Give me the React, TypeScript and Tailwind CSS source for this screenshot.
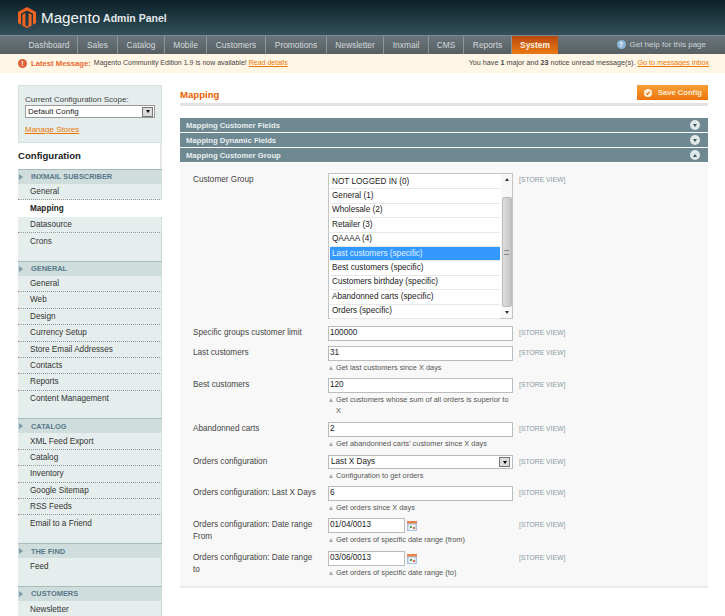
const navItems = ["Dashboard", "Sales", "Catalog", "Mobile", "Customers", "Promotions", "Newsletter", "Inxmail", "CMS", "Reports"];

const navWidths = ["w-[57px]", "w-[40px]", "w-[47px]", "w-[42px]", "w-[59px]", "w-[61px]", "w-[57px]", "w-[45px]", "w-[35px]", "w-[48px]"];

const groupOptions = [
  "NOT LOGGED IN (0)",
  "General (1)",
  "Wholesale (2)",
  "Retailer (3)",
  "QAAAA (4)",
  "Last customers (specific)",
  "Best customers (specific)",
  "Customers birthday (specific)",
  "Abandonned carts (specific)",
  "Orders (specific)",
];

const sideSections = [
  { title: "INXMAIL SUBSCRIBER", items: ["General", "Mapping", "Datasource", "Crons"] },
  { title: "GENERAL", items: ["General", "Web", "Design", "Currency Setup", "Store Email Addresses", "Contacts", "Reports", "Content Management"] },
  { title: "CATALOG", items: ["XML Feed Export", "Catalog", "Inventory", "Google Sitemap", "RSS Feeds", "Email to a Friend"] },
  { title: "THE FIND", items: ["Feed"] },
  { title: "CUSTOMERS", items: ["Newsletter"] },
];

const MagentoLogo = () => (
  <svg width="18" height="21" viewBox="0 0 18 21" className="shrink-0">
    <path d="M9 0 L18 5 V16 L15 17.8 V6.8 L9 3.4 L3 6.8 V17.8 L0 16 V5 Z" fill="#f26322" />
    <path d="M4.4 7.6 L7.4 5.9 V18.6 L9 19.6 L10.6 18.6 V5.9 L13.6 7.6 V18.8 L9 21 L4.4 18.8 Z" fill="#f26322" />
  </svg>
);

const Calendar = () => (
  <svg width="10" height="10" viewBox="0 0 10 10" className="ml-[2px] shrink-0">
    <rect x="0" y="0" width="10" height="10" fill="#a9c4da" />
    <rect x="0" y="0" width="10" height="2.5" fill="#e8834a" />
    <rect x="1.5" y="3.5" width="7" height="5.5" fill="#eef3f7" />
    <rect x="3" y="5" width="2" height="2" fill="#4f9e4a" />
    <rect x="6" y="6" width="2" height="2" fill="#d9683a" />
  </svg>
);

const SelectArrow = () => (
  <span className="flex h-[10px] w-[11px] items-center justify-center border border-[#777] bg-[#dcdcdc]">
    <span className="h-0 w-0 border-x-[2.5px] border-t-[3px] border-x-transparent border-t-black" />
  </span>
);

const Toggle = ({ up }: { up?: boolean }) => (
  <span className="flex h-[10px] w-[10px] items-center justify-center rounded-full bg-[#dfe7e7]">
    {up ? (
      <span className="h-0 w-0 border-x-[2.5px] border-b-[3px] border-x-transparent border-b-[#3a5560]" />
    ) : (
      <span className="h-0 w-0 border-x-[2.5px] border-t-[3px] border-x-transparent border-t-[#3a5560]" />
    )}
  </span>
);

const Note = ({ children }: { children: React.ReactNode }) => (
  <div className="mb-[2.5px] mt-[0.5px] flex items-start pl-[1px] text-[7.4px] leading-[11px] text-[#555]">
    <span className="mr-[3px] mt-[4px] h-0 w-0 shrink-0 border-x-[2.5px] border-b-[4px] border-x-transparent border-b-[#aaa]" />
    <span>{children}</span>
  </div>
);

const StoreView = () => <div className="pl-[6px] pt-[1px] text-[6.8px] leading-[11px] text-[#8a9aa0]">[STORE VIEW]</div>;

const Row = ({ label, className, children }: { label: string; className: string; children: React.ReactNode }) => (
  <div className={`grid grid-cols-[135px_185px_1fr] ${className}`}>
    <div className="pr-[7px] pt-[1px] text-[8.2px] leading-[12px] text-[#444]">{label}</div>
    <div>{children}</div>
    <StoreView />
  </div>
);

const TextInput = ({ value, small }: { value: string; small?: boolean }) => (
  <div className={`flex h-[15px] items-center border border-[#bbb] bg-white px-[1px] text-[8.2px] text-[#222] ${small ? "w-[77px]" : "w-full"}`}>{value}</div>
);

const Bar = ({ title, up }: { title: string; up?: boolean }) => (
  <div className="mb-[1px] flex h-[14px] items-center justify-between bg-[#6f8992] pl-[6px] pr-[8px] text-[7.7px] font-bold text-[#e8eeee]">
    <span className="mt-[1px]">{title}</span>
    <Toggle up={up} />
  </div>
);

export default function App() {
  return (
    <div className="h-[616px] w-[725px] overflow-hidden bg-white font-['Liberation_Sans',Arial,sans-serif]">
      <header className="flex h-[35px] items-center bg-gradient-to-b from-[#0c2128] to-[#33505c] pl-[18px]">
        <MagentoLogo />
        <span className="ml-[5px] text-[15.2px] leading-none text-[#f2f5f5]">Magento</span>
        <span className="ml-[3px] mt-[2px] text-[10.5px] font-bold leading-none text-[#e2e8ea]">Admin Panel</span>
      </header>
      <nav className="flex h-[19px] border-t border-[#7c8a90] bg-gradient-to-b from-[#6a757b] to-[#565f64] pl-[21px] text-[8.4px]">
        {navItems.map((item, i) => (
          <div key={item} className={`flex items-center justify-center border-r border-[#8b959a] text-[#d5dadc] ${navWidths[i]}`}>
            {item}
          </div>
        ))}
        <div className="flex w-[46px] items-center justify-center bg-gradient-to-b from-[#b8480e] to-[#ec7a12] font-bold text-[#fdf1e2]">System</div>
        <div className="ml-auto flex items-center pb-[1px] pr-[19px] text-[8px] text-[#cdd4d8]">
          <span className="mr-[4px] flex h-[9px] w-[9px] items-center justify-center rounded-full bg-[#8bb4d8] text-[7px] font-bold leading-none text-white">?</span>
          Get help for this page
        </div>
      </nav>
      <div className="flex h-[19px] items-center justify-between bg-[#fff6e6] pl-[18px] pr-[16px] text-[#444]">
        <div className="flex items-center text-[7px]">
          <span className="mr-[4px] flex h-[9px] w-[9px] items-center justify-center rounded-full bg-[#e0603c] text-[7px] font-bold leading-none text-white">!</span>
          <span className="mr-[3px] text-[7.7px] font-bold text-[#e9692c]">Latest Message:</span>
          Magento Community Edition 1.9 is now available!
          <span className="ml-[2px] text-[#ea7601] underline">Read details</span>
        </div>
        <div className="text-[7.2px]">
          You have <b>1</b> major and <b>23</b> notice unread message(s).
          <span className="ml-[2px] text-[#ea7601] underline">Go to messages inbox</span>
        </div>
      </div>
      <div className="flex items-start pl-[18px] pr-[17px] pt-[12px]">
        <aside className="w-[144px] shrink-0">
          <div className="h-[58px] border border-[#d5e2e1] bg-[#e6eeed] px-[6px] pt-[8px] text-[8px] text-[#444]">
            <div className="leading-[11px]">Current Configuration Scope:</div>
            <div className="flex h-[13px] items-center justify-between border border-[#999] bg-white pl-[2px] pr-[1px] text-[#222]">
              Default Config
              <SelectArrow />
            </div>
            <div className="mt-[6px] text-[#ea7601] underline">Manage Stores</div>
          </div>
          <div className="flex h-[26px] items-center border-r-2 border-[#e6e6e6] text-[9.6px] font-bold text-[#222]">Configuration</div>
          {sideSections.map((section) => (
            <section key={section.title}>
              <div className="flex h-[15px] items-center border-t border-[#a9bcbc] bg-[#cfdddd] text-[7.4px] font-bold text-[#58798a]">
                <span className="ml-[1px] mr-[8px] h-0 w-0 border-y-[3px] border-l-[4px] border-y-transparent border-l-[#7d9aa5]" />
                {section.title}
              </div>
              {section.items.map((item, i) => {
                const active = section.title === "INXMAIL SUBSCRIBER" && item === "Mapping";
                return (
                  <div
                    key={item}
                    className={`flex h-[16.4px] items-center pl-[12px] pt-[1px] text-[8.2px] ${active ? "bg-white font-bold text-[#222]" : "border-r border-[#c8d4d4] bg-[#e6eeed] text-[#333]"} ${i < section.items.length - 1 && !active ? "border-b border-dotted border-b-[#999]" : ""}`}
                  >
                    {item}
                  </div>
                );
              })}
              <div className="h-[11.4px] border-r border-[#c8d4d4] bg-[#e6eeed]" />
            </section>
          ))}
        </aside>
        <main className="ml-[18px] min-w-0 flex-1">
          <div className="flex h-[21px] items-start justify-between border-b-[3px] border-[#e2e2e2]">
            <h1 className="mt-[3px] text-[9.6px] font-bold leading-[14px] text-[#eb5e00]">Mapping</h1>
            <div className="flex h-[15px] w-[71px] items-center whitespace-nowrap bg-gradient-to-b from-[#f8a034] to-[#ec7508] pl-[7px] text-[7.6px] font-bold text-[#ffe9d0]">
              <svg width="8" height="8" viewBox="0 0 8 8" className="mr-[6px] shrink-0">
                <circle cx="4" cy="4" r="4" fill="#fff3e0" />
                <path d="M2.2 4.2 L3.5 5.4 L5.8 2.6" fill="none" stroke="#ec7508" strokeWidth="1.2" />
              </svg>
              <span className="mt-[1px]">Save Config</span>
            </div>
          </div>
          <div className="mt-[12px]">
            <Bar title="Mapping Customer Fields" />
            <Bar title="Mapping Dynamic Fields" />
            <Bar title="Mapping Customer Group" up />
          </div>
          <div className="h-[425px] border-b-2 border-[#eaeaea] bg-[#f8f8f8] pl-[13px] pt-[10px]">
            <Row label="Customer Group" className="mb-[7px]">
              <div className="flex h-[146px] border border-[#c4c4c4] bg-white">
                <div className="flex-1 p-[1px]">
                  {groupOptions.map((opt, i) => (
                    <div key={opt} className={`flex h-[14.4px] items-center border-b border-[#e8e8e8] pl-[2px] text-[8.2px] ${i === 5 ? "bg-[#3399ff] text-[#e4f1ff]" : "text-[#222]"}`}>
                      {opt}
                    </div>
                  ))}
                </div>
                <div className="flex w-[11px] flex-col items-center bg-[#f7f7f7] py-[4px]">
                  <span className="h-0 w-0 border-x-[2.5px] border-b-[3px] border-x-transparent border-b-[#333]" />
                  <div className="mt-[16px] flex h-[110px] w-[10px] items-center justify-center rounded-[2px] border border-[#bbb] bg-gradient-to-r from-[#dedede] to-[#c4c4c4]">
                    <span className="h-[5px] w-[5px] border-y border-[#888]" />
                  </div>
                  <span className="mt-auto h-0 w-0 border-x-[2.5px] border-t-[3px] border-x-transparent border-t-[#333]" />
                </div>
              </div>
            </Row>
            <Row label="Specific groups customer limit" className="mb-[5px]">
              <TextInput value="100000" />
            </Row>
            <Row label="Last customers" className="mb-[3px]">
              <TextInput value="31" />
              <Note>Get last customers since X days</Note>
            </Row>
            <Row label="Best customers" className="mb-[4px]">
              <TextInput value="120" />
              <Note>Get customers whose sum of all orders is superior to X</Note>
            </Row>
            <Row label="Abandonned carts" className="mb-[4px]">
              <TextInput value="2" />
              <Note>Get abandonned carts' customer since X days</Note>
            </Row>
            <Row label="Orders configuration" className="mb-[3px]">
              <div className="flex h-[14px] items-center justify-between border border-[#bbb] bg-white px-[2px] text-[8.2px] text-[#222]">
                Last X Days
                <SelectArrow />
              </div>
              <Note>Configuration to get orders</Note>
            </Row>
            <Row label="Orders configuration: Last X Days" className="mb-[3px]">
              <TextInput value="6" />
              <Note>Get orders since X days</Note>
            </Row>
            <Row label="Orders configuration: Date range From" className="mb-[4px]">
              <div className="flex items-center">
                <TextInput value="01/04/0013" small />
                <Calendar />
              </div>
              <Note>Get orders of specific date range (from)</Note>
            </Row>
            <Row label="Orders configuration: Date range to" className="">
              <div className="flex items-center">
                <TextInput value="03/06/0013" small />
                <Calendar />
              </div>
              <Note>Get orders of specific date range (to)</Note>
            </Row>
          </div>
        </main>
      </div>
    </div>
  );
}
